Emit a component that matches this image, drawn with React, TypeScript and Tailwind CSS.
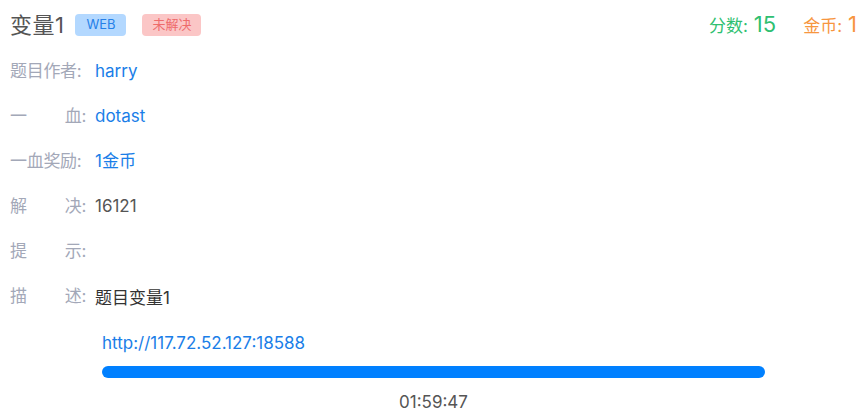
import React from 'react';

const font = { fontFamily: 'Inter, "Noto Sans CJK SC", sans-serif' };

interface InfoRow {
  label: string[];
  value: string;
  tone: 'link' | 'plain';
}

const rows: InfoRow[] = [
  { label: ['题目作者:'], value: 'harry', tone: 'link' },
  { label: ['一', '血:'], value: 'dotast', tone: 'link' },
  { label: ['一血奖励:'], value: '1金币', tone: 'link' },
  { label: ['解', '决:'], value: '16121', tone: 'plain' },
  { label: ['提', '示:'], value: '', tone: 'plain' },
];

const Label: React.FC<{ parts: string[] }> = ({ parts }) => (
  <div className="w-[76px] flex justify-between text-[17px] text-[#a3a8b8] tracking-[-0.3px]">
    {parts.map((p) => (
      <span key={p} className="whitespace-nowrap">{p}</span>
    ))}
  </div>
);

export default function App() {
  return (
    <div className="w-[865px] h-[408px] bg-white overflow-hidden" style={font}>
      <div className="h-[49px] flex items-center justify-between pl-[10px] pr-[8px]">
        <div className="flex items-center">
          <h1 className="text-[22px] text-[#555] leading-none tracking-[0.5px]">变量1</h1>
          <span className="ml-[11px] w-[51px] h-[22px] rounded-[4px] bg-[#b3d8ff] text-[#2580e8] text-[13px] flex items-center justify-center">
            WEB
          </span>
          <span className="ml-[16px] w-[59px] h-[22px] rounded-[4px] bg-[#fbc6c6] text-[#ee6b6b] text-[13px] flex items-center justify-center">
            未解决
          </span>
        </div>
        <div className="flex items-baseline">
          <span className="text-[#2fbf71] text-[17px]">分数:</span>
          <span className="text-[#2fbf71] text-[22px] ml-[6px]">15</span>
          <span className="text-[#f7963f] text-[17px] ml-[27px]">金币:</span>
          <span className="text-[#f7963f] text-[22px] ml-[6px]">1</span>
        </div>
      </div>

      <div className="pl-[10px]">
        {rows.map((row) => (
          <div key={row.label.join('')} className="h-[45px] flex items-center">
            <Label parts={row.label} />
            <span
              className={`ml-[9px] text-[17px] ${
                row.tone === 'link' ? 'text-[#1a7ee8]' : 'text-[#555]'
              }`}
            >
              {row.value}
            </span>
          </div>
        ))}
        <div className="h-[45px] flex items-center">
          <Label parts={['描', '述:']} />
          <span className="ml-[9px] mt-[4px] text-[17px] text-[#333]">题目变量1</span>
        </div>
      </div>

      <div className="pl-[102px] w-[765px]">
        <a className="block text-[17px] text-[#1a7ee8] leading-none mt-[16px]">
          http://117.72.52.127:18588
        </a>
        <div className="mt-[14px] h-[12px] rounded-full bg-[#0080ff]" />
        <div className="mt-[16px] text-center text-[17px] text-[#555] leading-[16px]">01:59:47</div>
      </div>
    </div>
  );
}
